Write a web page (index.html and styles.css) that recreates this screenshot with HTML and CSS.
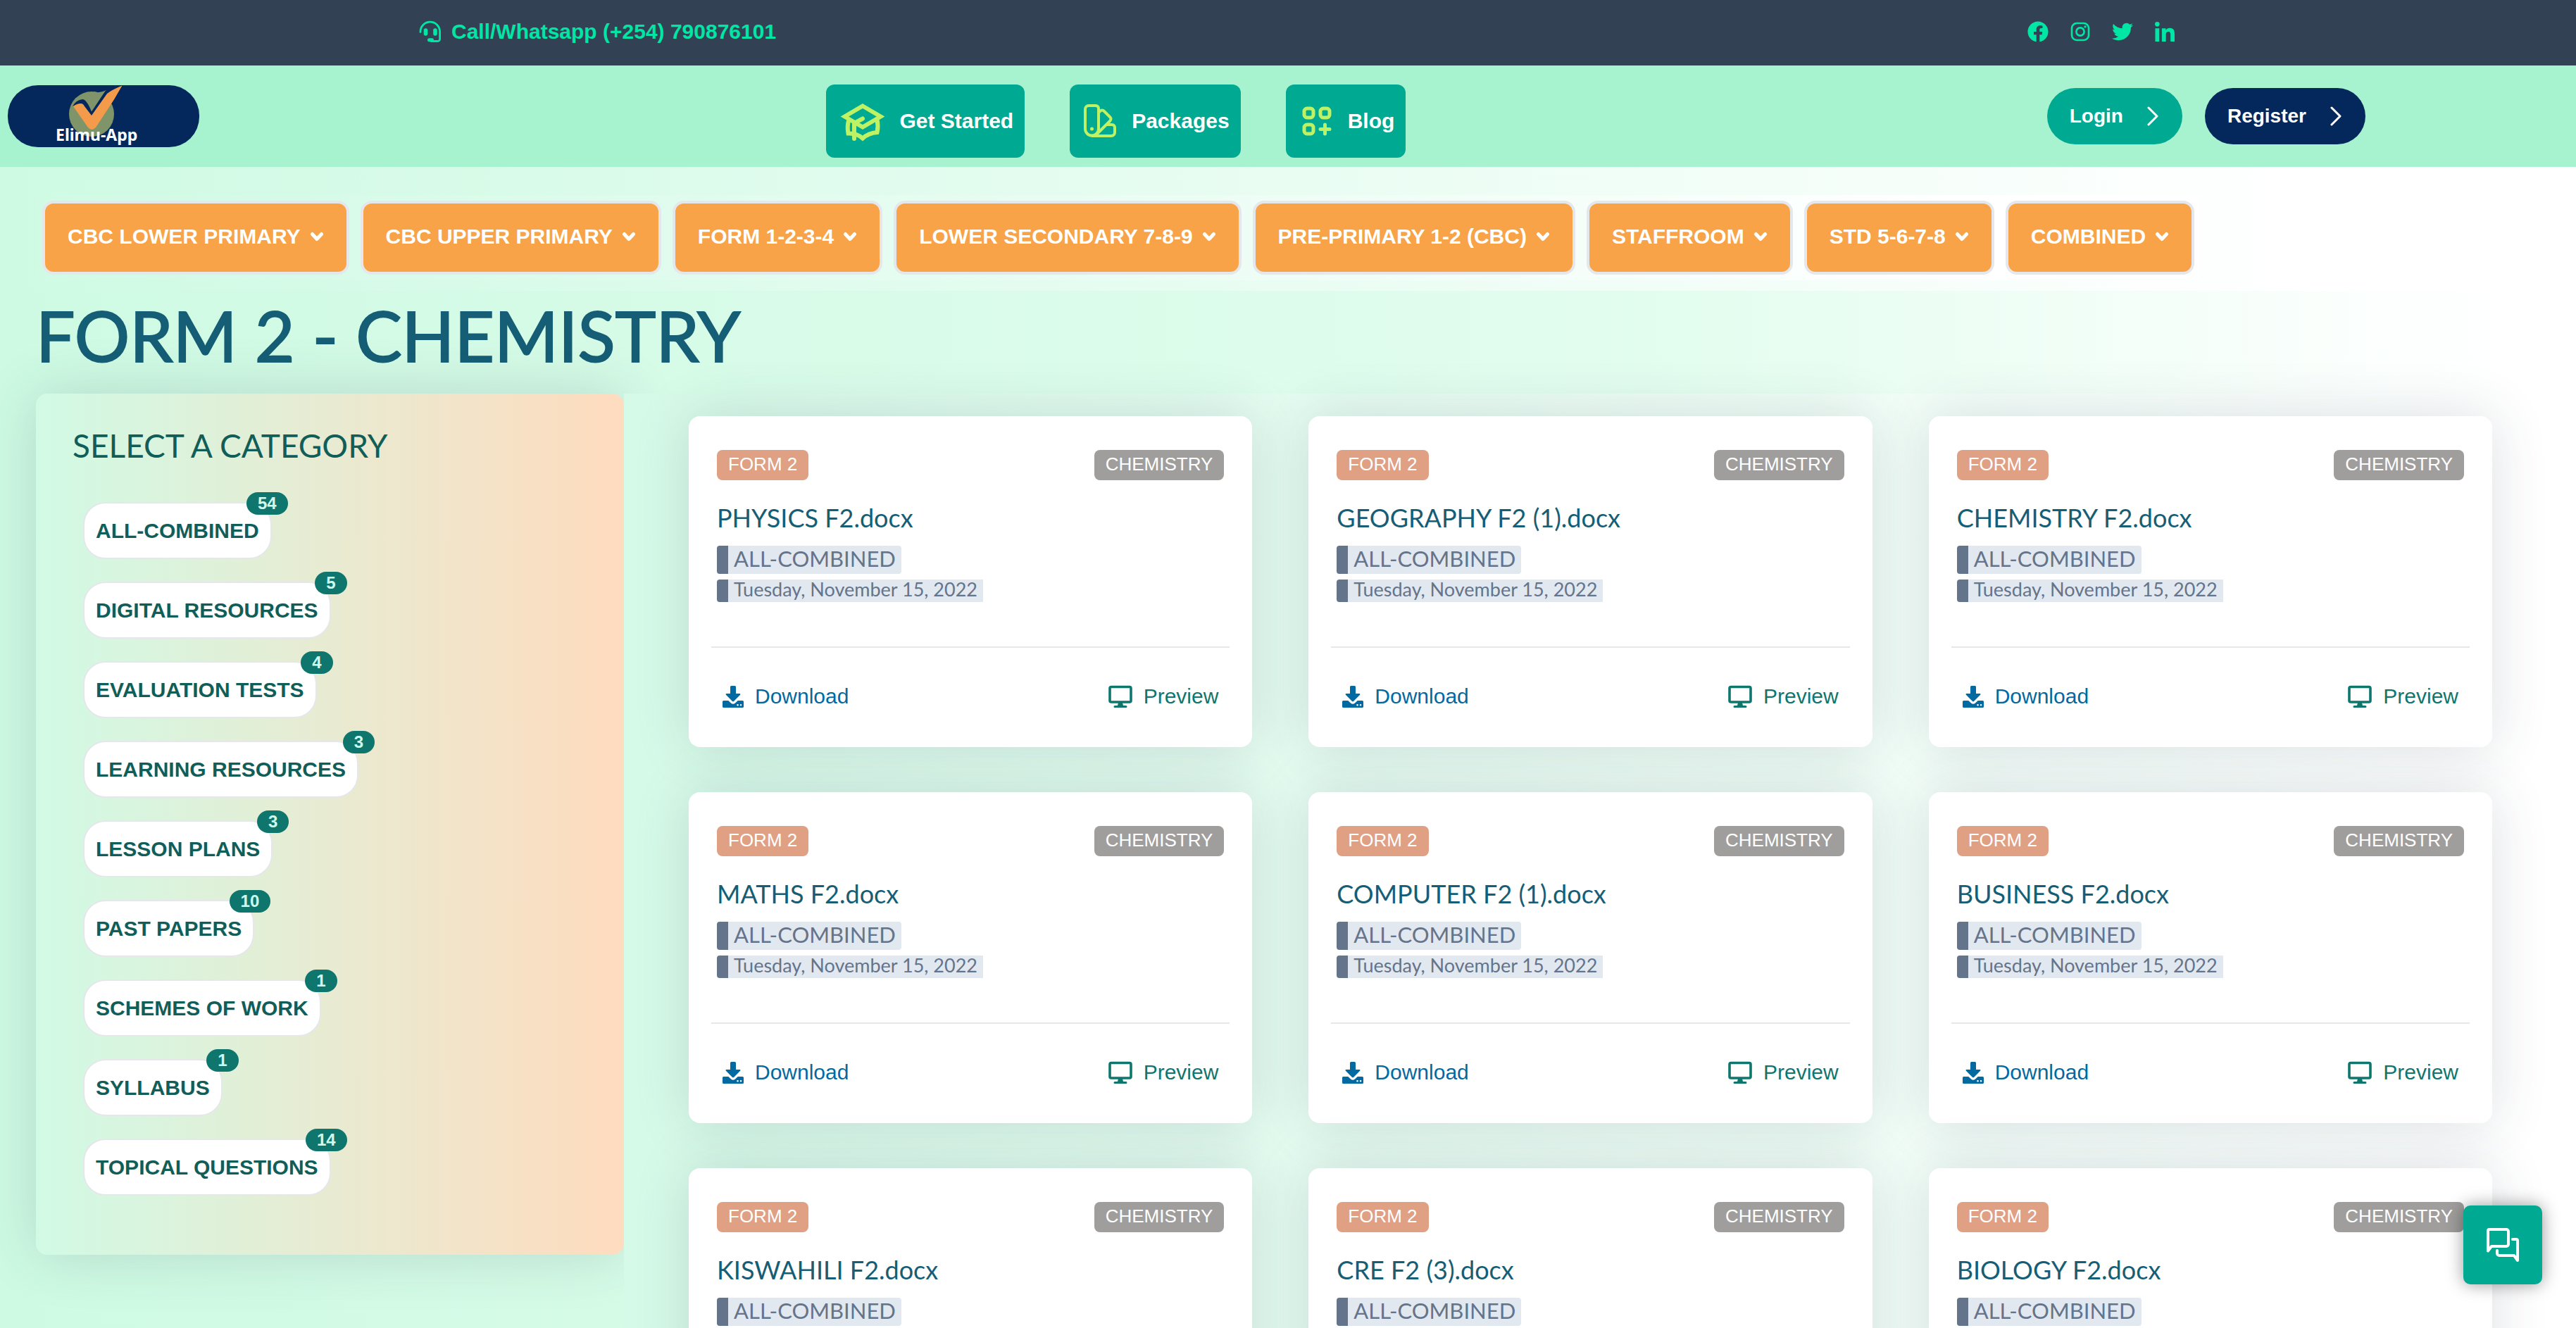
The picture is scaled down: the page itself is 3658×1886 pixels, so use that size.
FILE: index.html
```html
<!DOCTYPE html>
<html lang="en">
<head>
<meta charset="utf-8">
<meta name="viewport" content="width=device-width, initial-scale=1">
<title>Elimu-App | Form 2 - Chemistry</title>
<link rel="stylesheet" href="styles.css">
</head>
<body>
<svg class="sprite" aria-hidden="true">
  <symbol id="i-chev" viewBox="0 0 20 14"><path d="M3.500 3.500l6.500 7 6.500-7" fill="none" stroke="currentColor" stroke-width="5" stroke-linecap="round" stroke-linejoin="round"/></symbol>
  <symbol id="i-next" viewBox="0 0 16 28"><path d="M2 2l12 12L2 26" fill="none" stroke="currentColor" stroke-width="3" stroke-linecap="round" stroke-linejoin="round"/></symbol>
  <symbol id="i-download" viewBox="0 0 30 32"><path fill="currentColor" d="M12.500 1h5q1.500 0 1.500 1.500V12h5.500q1.600.4.600 1.800l-8.900 9q-1.200 1.100-2.400 0l-8.900-9q-1-1.400.6-1.800H11V2.500Q11 1 12.500 1z"/><path fill="currentColor" fill-rule="evenodd" d="M1.500 22h6.800l3.700 3.500q3 2.400 6 0l3.700-3.500h6.800q1.500 0 1.500 1.500v7q0 1.500-1.500 1.500h-27Q0 32 0 30.500v-7Q0 22 1.500 22zM21.500 27a1.300 1.300 0 1 0 .1 2.600 1.300 1.300 0 0 0-.1-2.600zm4.500 0a1.300 1.300 0 1 0 .1 2.600A1.300 1.300 0 0 0 26 27z"/></symbol>
  <symbol id="i-screen" viewBox="0 0 34 32"><rect x="2" y="2.500" width="30" height="21.500" rx="2" fill="none" stroke="currentColor" stroke-width="3.600"/><path fill="currentColor" d="M14 25h6l1 4h4q1.500 0 1.500 1.500T25 32H9q-1.500 0-1.500-1.500T9 29h4z"/></symbol>
</svg>

<div class="topbar">
  <a class="call" href="#call">
    <svg width="32" height="32" viewBox="0 0 32 32" fill="none" stroke="currentColor" stroke-width="2.800" stroke-linecap="round"><path d="M2 16.500V16a13.800 13.800 0 0 1 27.600 0v10.500a3 3 0 0 1-3 3H17"/><path stroke-width="5.600" d="M9.500 14v5M23 14v5"/><path d="M14.500 27.800h4" stroke-width="5"/></svg>
    Call/Whatsapp (+254) 790876101
  </a>
  <div class="social">
    <a href="#facebook" aria-label="Facebook"><svg width="30" height="30" viewBox="0 0 512 512"><path fill="currentColor" d="M504 256C504 119 393 8 256 8S8 119 8 256c0 123.780 90.690 226.380 209.250 245V327.690h-63V256h63v-54.640c0-62.150 37-96.480 93.670-96.480 27.140 0 55.520 4.840 55.520 4.840v61h-31.280c-30.800 0-40.410 19.120-40.410 38.730V256h68.780l-11 71.690h-57.780V501C413.310 482.380 504 379.780 504 256z"/></svg></a>
    <a href="#instagram" aria-label="Instagram"><svg width="30" height="30" viewBox="0 0 30 30" fill="none" stroke="currentColor" stroke-width="2.600"><rect x="3" y="3" width="24" height="24" rx="7"/><circle cx="15" cy="15" r="5.600"/><circle cx="22" cy="8" r="1.700" fill="currentColor" stroke="none"/></svg></a>
    <a href="#twitter" aria-label="Twitter"><svg width="30" height="30" viewBox="0 0 512 512"><path fill="currentColor" d="M459.370 151.716c.325 4.548.325 9.097.325 13.645 0 138.720-105.583 298.558-298.558 298.558-59.452 0-114.680-17.219-161.137-47.106 8.447.974 16.568 1.299 25.340 1.299 49.055 0 94.213-16.568 130.274-44.832-46.132-.975-84.792-31.188-98.112-72.772 6.498.974 12.995 1.624 19.818 1.624 9.421 0 18.843-1.300 27.614-3.573-48.081-9.747-84.143-51.980-84.143-102.985v-1.299c13.969 7.797 30.214 12.670 47.431 13.319-28.264-18.843-46.781-51.005-46.781-87.391 0-19.492 5.197-37.360 14.294-52.954 51.655 63.675 129.300 105.258 216.365 109.807-1.624-7.797-2.599-15.918-2.599-24.040 0-57.828 46.782-104.934 104.934-104.934 30.213 0 57.502 12.670 76.670 33.137 23.715-4.548 46.456-13.320 66.599-25.340-7.798 24.366-24.366 44.833-46.132 57.827 21.117-2.273 41.584-8.122 60.426-16.243-14.292 20.791-32.161 39.308-52.628 54.253z"/></svg></a>
    <a href="#linkedin" aria-label="LinkedIn"><svg width="30" height="28" viewBox="-16 0 480 448"><path fill="currentColor" d="M100.280 448H7.400V148.900h92.880zM53.790 108.100C24.090 108.100 0 83.500 0 53.800a53.790 53.790 0 0 1 107.580 0c0 29.700-24.100 54.300-53.790 54.300zM447.900 448h-92.680V302.400c0-34.700-.7-79.200-48.290-79.200-48.290 0-55.690 37.700-55.690 76.700V448h-92.780V148.900h89.080v40.800h1.300c12.400-23.500 42.690-48.300 87.880-48.300 94 0 111.280 61.900 111.280 142.300V448z"/></svg></a>
  </div>
</div>

<header class="header">
  <a class="logo" href="#home">
    <svg width="272" height="88" viewBox="0 0 272 88" role="img" aria-label="Elimu-App">
      <rect width="272" height="88" rx="43" fill="#05285c"/>
      <circle cx="119" cy="41" r="32" fill="#80946a"/>
      <path fill="#80946a" d="M122 9q8 3 18-2-6 8-5 14l-10 6z"/>
      <path fill="#05285c" d="M92 30q5-9 14-10 6 0 13 17.500L139 7.500l6 3-22 40h-8L104 26z"/>
      <path fill="#f49b4b" d="M93 30q5-4 11-4 3 0 5 4l10 13 22-31Q147 7 162.500.5q-7 12-11 19L125 60q-5.500 6-11 0z"/>
      <text class="logo-text" x="68" y="79">Elimu-App</text>
    </svg>
  </a>
  <nav class="nav">
    <a class="nav-link" href="#start">
      <svg width="72" height="72" viewBox="0 0 72 72" fill="none" stroke="currentColor" stroke-width="6"><path d="M36 14.500L61.500 29.500 36 44.500 10.500 29.500z"/><path d="M16.500 34Q13.500 43 15.500 53.500 28 53 36 60.500 44 53 56.500 52 58.500 43 56.500 34"/><path stroke-linecap="round" d="M36 32.500l-12 6.500v22"/></svg>
      Get Started
    </a>
    <a class="nav-link" href="#packages">
      <svg width="56" height="56" viewBox="0 0 56 56" fill="none" stroke="currentColor" stroke-width="4" stroke-linejoin="round"><path d="M11 6h10a4 4 0 0 1 4 4v29a9.500 9.500 0 0 1-19 0V11a5 5 0 0 1 5-5z"/><path d="M25 16l2-2q3-3 6 0l8 8q3 3 0 6L22 47"/><path d="M37 33h7a4 4 0 0 1 4 4v7a5 5 0 0 1-5 5H15"/><circle cx="15.500" cy="39" r="2.500" fill="currentColor" stroke="none"/></svg>
      Packages
    </a>
    <a class="nav-link" href="#blog">
      <svg width="56" height="56" viewBox="0 0 56 56" fill="none" stroke="currentColor" stroke-width="5" stroke-linecap="round"><rect x="10" y="10" width="13" height="13" rx="4"/><rect x="33" y="10" width="13" height="13" rx="4"/><rect x="10" y="33" width="13" height="13" rx="4"/><path d="M39.500 33v13M33 39.500h13"/></svg>
      Blog
    </a>
  </nav>
  <div class="account">
    <a class="pill" href="#login">Login <svg width="16" height="28"><use href="#i-next"/></svg></a>
    <a class="pill pill-dark" href="#register">Register <svg width="16" height="28"><use href="#i-next"/></svg></a>
  </div>
</header>

<div class="levels">
  <div class="levels-inner">
    <button class="level" type="button">CBC LOWER PRIMARY <svg width="20" height="14"><use href="#i-chev"/></svg></button>
    <button class="level" type="button">CBC UPPER PRIMARY <svg width="20" height="14"><use href="#i-chev"/></svg></button>
    <button class="level" type="button">FORM 1-2-3-4 <svg width="20" height="14"><use href="#i-chev"/></svg></button>
    <button class="level" type="button">LOWER SECONDARY 7-8-9 <svg width="20" height="14"><use href="#i-chev"/></svg></button>
    <button class="level" type="button">PRE-PRIMARY 1-2 (CBC) <svg width="20" height="14"><use href="#i-chev"/></svg></button>
    <button class="level" type="button">STAFFROOM <svg width="20" height="14"><use href="#i-chev"/></svg></button>
    <button class="level" type="button">STD 5-6-7-8 <svg width="20" height="14"><use href="#i-chev"/></svg></button>
    <button class="level" type="button">COMBINED <svg width="20" height="14"><use href="#i-chev"/></svg></button>
  </div>
</div>

<h1 class="page-title">FORM 2 - CHEMISTRY</h1>

<main class="main">
  <aside class="sidebar">
    <h2 class="sidebar-title">SELECT A CATEGORY</h2>
    <ul class="cats">
      <li><a class="cat" href="#c1">ALL-COMBINED<span class="count">54</span></a></li>
      <li><a class="cat" href="#c2">DIGITAL RESOURCES<span class="count">5</span></a></li>
      <li><a class="cat" href="#c3">EVALUATION TESTS<span class="count">4</span></a></li>
      <li><a class="cat" href="#c4">LEARNING RESOURCES<span class="count">3</span></a></li>
      <li><a class="cat" href="#c5">LESSON PLANS<span class="count">3</span></a></li>
      <li><a class="cat" href="#c6">PAST PAPERS<span class="count">10</span></a></li>
      <li><a class="cat" href="#c7">SCHEMES OF WORK<span class="count">1</span></a></li>
      <li><a class="cat" href="#c8">SYLLABUS<span class="count">1</span></a></li>
      <li><a class="cat" href="#c9">TOPICAL QUESTIONS<span class="count">14</span></a></li>
    </ul>
  </aside>

  <section class="docs">
    <article class="card">
      <div class="badges"><span class="badge">FORM 2</span><span class="badge badge-grey">CHEMISTRY</span></div>
      <h3 class="doc-name">PHYSICS F2.docx</h3>
      <p class="tag">ALL-COMBINED</p>
      <p class="date">Tuesday, November 15, 2022</p>
      <div class="actions"><a class="download" href="#d1"><svg width="30" height="32"><use href="#i-download"/></svg>Download</a><a class="preview" href="#p1"><svg width="34" height="32"><use href="#i-screen"/></svg>Preview</a></div>
    </article>
    <article class="card">
      <div class="badges"><span class="badge">FORM 2</span><span class="badge badge-grey">CHEMISTRY</span></div>
      <h3 class="doc-name">GEOGRAPHY F2 (1).docx</h3>
      <p class="tag">ALL-COMBINED</p>
      <p class="date">Tuesday, November 15, 2022</p>
      <div class="actions"><a class="download" href="#d2"><svg width="30" height="32"><use href="#i-download"/></svg>Download</a><a class="preview" href="#p2"><svg width="34" height="32"><use href="#i-screen"/></svg>Preview</a></div>
    </article>
    <article class="card">
      <div class="badges"><span class="badge">FORM 2</span><span class="badge badge-grey">CHEMISTRY</span></div>
      <h3 class="doc-name">CHEMISTRY F2.docx</h3>
      <p class="tag">ALL-COMBINED</p>
      <p class="date">Tuesday, November 15, 2022</p>
      <div class="actions"><a class="download" href="#d3"><svg width="30" height="32"><use href="#i-download"/></svg>Download</a><a class="preview" href="#p3"><svg width="34" height="32"><use href="#i-screen"/></svg>Preview</a></div>
    </article>
    <article class="card">
      <div class="badges"><span class="badge">FORM 2</span><span class="badge badge-grey">CHEMISTRY</span></div>
      <h3 class="doc-name">MATHS F2.docx</h3>
      <p class="tag">ALL-COMBINED</p>
      <p class="date">Tuesday, November 15, 2022</p>
      <div class="actions"><a class="download" href="#d4"><svg width="30" height="32"><use href="#i-download"/></svg>Download</a><a class="preview" href="#p4"><svg width="34" height="32"><use href="#i-screen"/></svg>Preview</a></div>
    </article>
    <article class="card">
      <div class="badges"><span class="badge">FORM 2</span><span class="badge badge-grey">CHEMISTRY</span></div>
      <h3 class="doc-name">COMPUTER F2 (1).docx</h3>
      <p class="tag">ALL-COMBINED</p>
      <p class="date">Tuesday, November 15, 2022</p>
      <div class="actions"><a class="download" href="#d5"><svg width="30" height="32"><use href="#i-download"/></svg>Download</a><a class="preview" href="#p5"><svg width="34" height="32"><use href="#i-screen"/></svg>Preview</a></div>
    </article>
    <article class="card">
      <div class="badges"><span class="badge">FORM 2</span><span class="badge badge-grey">CHEMISTRY</span></div>
      <h3 class="doc-name">BUSINESS F2.docx</h3>
      <p class="tag">ALL-COMBINED</p>
      <p class="date">Tuesday, November 15, 2022</p>
      <div class="actions"><a class="download" href="#d6"><svg width="30" height="32"><use href="#i-download"/></svg>Download</a><a class="preview" href="#p6"><svg width="34" height="32"><use href="#i-screen"/></svg>Preview</a></div>
    </article>
    <article class="card">
      <div class="badges"><span class="badge">FORM 2</span><span class="badge badge-grey">CHEMISTRY</span></div>
      <h3 class="doc-name">KISWAHILI F2.docx</h3>
      <p class="tag">ALL-COMBINED</p>
      <p class="date">Tuesday, November 15, 2022</p>
      <div class="actions"><a class="download" href="#d7"><svg width="30" height="32"><use href="#i-download"/></svg>Download</a><a class="preview" href="#p7"><svg width="34" height="32"><use href="#i-screen"/></svg>Preview</a></div>
    </article>
    <article class="card">
      <div class="badges"><span class="badge">FORM 2</span><span class="badge badge-grey">CHEMISTRY</span></div>
      <h3 class="doc-name">CRE F2 (3).docx</h3>
      <p class="tag">ALL-COMBINED</p>
      <p class="date">Tuesday, November 15, 2022</p>
      <div class="actions"><a class="download" href="#d8"><svg width="30" height="32"><use href="#i-download"/></svg>Download</a><a class="preview" href="#p8"><svg width="34" height="32"><use href="#i-screen"/></svg>Preview</a></div>
    </article>
    <article class="card">
      <div class="badges"><span class="badge">FORM 2</span><span class="badge badge-grey">CHEMISTRY</span></div>
      <h3 class="doc-name">BIOLOGY F2.docx</h3>
      <p class="tag">ALL-COMBINED</p>
      <p class="date">Tuesday, November 15, 2022</p>
      <div class="actions"><a class="download" href="#d9"><svg width="30" height="32"><use href="#i-download"/></svg>Download</a><a class="preview" href="#p9"><svg width="34" height="32"><use href="#i-screen"/></svg>Preview</a></div>
    </article>
  </section>
</main>

<button class="chat" type="button" aria-label="Open chat">
  <svg width="48" height="48" viewBox="0 0 48 48" fill="none" stroke="currentColor" stroke-width="4" stroke-linecap="round" stroke-linejoin="round"><path d="M5 2h24a3 3 0 0 1 3 3v18a3 3 0 0 1-3 3H8l-5 6.500V4a2 2 0 0 1 2-2z"/><path d="M38 16h5a2 2 0 0 1 2 2v28l-5-7H19a3 3 0 0 1-3-3v-4"/></svg>
</button>
</body>
</html>
```

FILE: styles.css
```css
* {
  box-sizing: border-box;
}

body {
  margin: 0;
  font-family: "Liberation Sans", Arial, sans-serif;
  font-size: 30px;
  background: linear-gradient(to right, #cefae3 0%, #e2fdee 64%, #fdfffe 94%, #ffffff 100%);
}

h1, h2, h3, p, ul {
  margin: 0;
  padding: 0;
  font-weight: 400;
}

a {
  text-decoration: none;
}

svg {
  display: block;
  flex: none;
}

.sprite {
  position: absolute;
  width: 0;
  height: 0;
}

/* Contact bar */
.topbar {
  display: flex;
  justify-content: space-between;
  align-items: center;
  height: 93px;
  padding: 0 569px 4px 595px;
  background: #334155;
  color: #00e6a5;
}

.topbar a {
  color: inherit;
}

.call {
  display: flex;
  align-items: center;
  gap: 14px;
  font-weight: 700;
}

.social {
  display: flex;
  align-items: center;
  gap: 30px;
}

/* Header */
.header {
  display: flex;
  justify-content: space-between;
  align-items: center;
  height: 144px;
  padding: 0 299px 0 11px;
  background: #a7f3d0;
}

.logo-text {
  font: 700 23px "Noto Sans", sans-serif;
  fill: #ffffff;
}

.nav {
  display: flex;
  gap: 64px;
  margin-right: 20px;
  padding-top: 14px;
}

.nav-link {
  display: flex;
  align-items: center;
  gap: 16px;
  height: 104px;
  padding: 0 16px;
  border-radius: 12px;
  background: #00a991;
  color: #ffffff;
  font-weight: 700;
}

.nav-link svg {
  color: #bef264;
}

.account {
  display: flex;
  gap: 32px;
}

.pill {
  display: flex;
  align-items: center;
  gap: 34px;
  height: 80px;
  padding: 0 34px 0 32px;
  border-radius: 40px;
  background: #00a991;
  color: #ffffff;
  font-size: 28px;
  font-weight: 700;
}

.pill-dark {
  background: #05285c;
}

/* School levels */
.levels {
  display: flex;
  padding: 40px 52px 15px;
  background: linear-gradient(to right, #cefae3, #ffffff 90%);
}

.levels-inner {
  display: flex;
  gap: 16px;
  padding: 8px;
  background: linear-gradient(to right, #d1fae5, #ffffff 90%);
}

.level {
  display: flex;
  align-items: center;
  gap: 13px;
  height: 105px;
  padding: 0 32px 4px;
  border: 4px solid #e5e7eb;
  border-radius: 16px;
  background: #f8a347;
  color: #ffffff;
  font: 700 30px "Liberation Sans", Arial, sans-serif;
  white-space: nowrap;
}

.page-title {
  padding: 0 51px 20px;
  color: #155e75;
  font: 400 98px/126px Lato, sans-serif;
  -webkit-text-stroke: 2px #155e75;
}

/* Main area */
.main {
  display: grid;
  grid-template-columns: 835px 1fr;
  align-items: start;
  padding: 0 39px 0 51px;
}

.sidebar {
  padding: 50px 52px 84px;
  border-radius: 16px;
  background: linear-gradient(to right, #d1fae5, #fedcbf 98%);
  box-shadow: 0 0 80px rgba(51, 65, 85, 0.18);
}

.sidebar-title {
  color: #115e59;
  font: 400 46px/48px Lato, sans-serif;
}

.cats {
  display: flex;
  flex-direction: column;
  align-items: flex-start;
  gap: 32px;
  padding: 56px 15px 0;
  list-style: none;
}

.cat {
  position: relative;
  display: block;
  padding: 16px;
  border: 2px solid #e5e7eb;
  border-radius: 32px;
  background: #ffffff;
  color: #115e59;
  font-weight: 700;
  line-height: 45px;
}

.count {
  position: absolute;
  top: -16px;
  right: -25px;
  padding: 0 16px;
  border-radius: 16px;
  background: #0f766e;
  color: #ccfbf1;
  font-size: 24px;
  line-height: 32px;
}

.docs {
  display: grid;
  grid-template-columns: repeat(3, 1fr);
  gap: 64px 80px;
  padding: 32px 80px 64px 92px;
  background: linear-gradient(to right, #d6fae8, #ffffff 98%);
}

.card {
  display: flex;
  flex-direction: column;
  align-items: flex-start;
  padding: 48px 32px 32px;
  border-radius: 16px;
  background: #ffffff;
  box-shadow: 0 0 80px rgba(51, 65, 85, 0.16);
}

.badges {
  display: flex;
  justify-content: space-between;
  align-self: stretch;
  padding: 0 8px;
}

.badge {
  padding: 0 16px 3px;
  border-radius: 8px;
  background: #e0a084;
  color: #ffffff;
  font-size: 26px;
  line-height: 40px;
}

.badge-grey {
  background: #9f9e9c;
}

.doc-name {
  margin: 29px 8px 16px;
  color: #155e75;
  font: 400 36px/48px Lato, sans-serif;
}

.tag,
.date {
  margin-left: 8px;
  padding: 0 8px;
  border-left: 16px solid #64748b;
  background: #e2e8f0;
  color: #64748b;
}

.tag {
  padding-bottom: 4px;
  border-radius: 4px;
  font: 400 31px/36px Lato, sans-serif;
}

.date {
  margin-top: 8px;
  padding-bottom: 4px;
  border-radius: 4px 0 0 4px;
  font: 400 27px/28px Lato, sans-serif;
}

.actions {
  display: flex;
  justify-content: space-between;
  align-self: stretch;
  margin-top: 63px;
  padding: 49px 16px 20px;
  border-top: 2px solid #e5e7eb;
}

.download,
.preview {
  display: flex;
  align-items: center;
  line-height: 40px;
}

.download {
  gap: 16px;
  color: #0369a1;
}

.preview {
  gap: 16px;
  color: #0f766e;
}

/* Chat launcher */
.chat {
  position: fixed;
  right: 48px;
  bottom: 62px;
  display: flex;
  align-items: center;
  justify-content: center;
  width: 112px;
  height: 112px;
  padding: 0;
  border: 0;
  border-radius: 10px;
  background: #00a991;
  color: #ffffff;
  box-shadow: 0 0 24px rgba(0, 0, 0, 0.4);
}
```
